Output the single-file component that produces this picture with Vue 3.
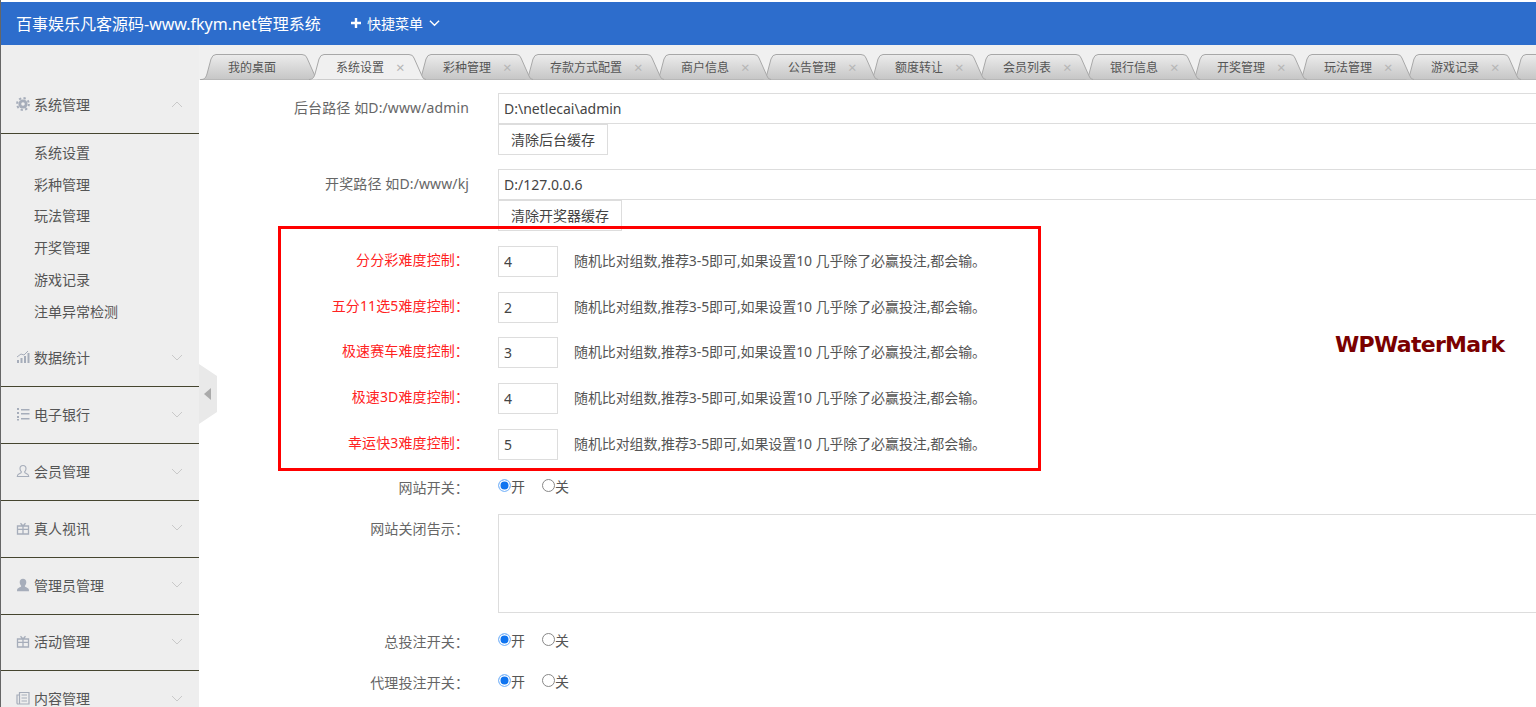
<template>
  <div class="page">
    <header class="topbar">
      <span class="brand">百事娱乐凡客源码-www.fkym.net管理系统</span>
      <a class="quick">
        <svg class="quick-plus" viewBox="0 0 12 12"><path d="M6 1v10M1 6h10" /></svg>
        快捷菜单
        <svg class="quick-arrow" viewBox="0 0 12 8"><path d="M1 1.5l5 5 5-5" /></svg>
      </a>
    </header>

    <div class="body">
      <aside class="sidebar">
        <div v-for="group in menu" :key="group.name" class="group">
          <div class="group-head">
            <svg class="group-icon" viewBox="0 0 14 14" v-html="icons[group.icon]"></svg>
            <span class="group-name">{{ group.name }}</span>
            <svg class="group-arrow" viewBox="0 0 12 7"><path :d="group.items ? 'M1 6l5-5 5 5' : 'M1 1l5 5 5-5'" /></svg>
          </div>
          <ul v-if="group.items" class="sub">
            <li v-for="item in group.items" :key="item">{{ item }}</li>
          </ul>
        </div>
      </aside>

      <main class="main">
        <div class="tabs">
          <svg class="defs" width="0" height="0">
            <defs>
              <linearGradient id="tabfill" x1="0" y1="0" x2="0" y2="1">
                <stop offset="0" stop-color="#ececec" />
                <stop offset="1" stop-color="#c6c6c6" />
              </linearGradient>
            </defs>
          </svg>
          <div
            v-for="(tab, i) in tabs"
            :key="i"
            class="tab"
            :class="{ active: tab.active }"
            :style="{ width: tab.width + 'px', zIndex: tab.active ? 50 : 30 - i }"
          >
            <svg class="tab-bg" :width="tab.width + 10" height="26" :viewBox="`0 0 ${tab.width + 10} 26`">
              <path :d="tabPath(tab.width + 10)" />
            </svg>
            <span class="tab-name">{{ tab.name }}</span>
            <span v-if="tab.close" class="tab-close">×</span>
          </div>
        </div>

        <div class="content">
          <div class="row first">
            <label class="label">后台路径 如D:/www/admin</label>
            <div class="field">
              <input class="input wide" value="D:\netlecai\admin" />
              <button class="btn">清除后台缓存</button>
            </div>
          </div>
          <div class="row">
            <label class="label">开奖路径 如D:/www/kj</label>
            <div class="field">
              <input class="input wide" value="D:/127.0.0.6" />
              <button class="btn">清除开奖器缓存</button>
            </div>
          </div>

          <div v-for="item in levels" :key="item.name" class="row level">
            <label class="label red">{{ item.name }}：</label>
            <div class="field inline">
              <input class="input small" :value="item.value" />
              <span class="hint">随机比对组数,推荐3-5即可,如果设置10 几乎除了必赢投注,都会输。</span>
            </div>
          </div>

          <div class="row switch-a">
            <label class="label">网站开关：</label>
            <div class="radios">
              <label class="radio"><input type="radio" name="site" checked />开</label>
              <label class="radio"><input type="radio" name="site" />关</label>
            </div>
          </div>
          <div class="row notice">
            <label class="label">网站关闭告示：</label>
            <div class="field"><textarea class="area"></textarea></div>
          </div>
          <div class="row switch-b">
            <label class="label">总投注开关：</label>
            <div class="radios">
              <label class="radio"><input type="radio" name="bet" checked />开</label>
              <label class="radio"><input type="radio" name="bet" />关</label>
            </div>
          </div>
          <div class="row switch-c">
            <label class="label">代理投注开关：</label>
            <div class="radios">
              <label class="radio"><input type="radio" name="agent" checked />开</label>
              <label class="radio"><input type="radio" name="agent" />关</label>
            </div>
          </div>

          <!-- annotation drawn on top of the form -->
          <div class="redbox"></div>
          <div class="watermark">WPWaterMark</div>
        </div>

        <div class="collapse"><i></i></div>
      </main>
    </div>
  </div>
</template>

<script setup>
const icons = {
  gear: '<circle cx="7" cy="7" r="4.6" fill="#a6adba"/><circle cx="7" cy="7" r="5.9" fill="none" stroke="#a6adba" stroke-width="2" stroke-dasharray="2.3 2.3"/><circle cx="7" cy="7" r="1.8" fill="#eee"/>',
  chart: '<path d="M1 13v-3h2v3zM4.500 13V8h2v5zM8 13V6h2v7zM11.500 13V3h2v10z" fill="#a6adba"/><path d="M1 7l4-3 3 1 4-4" fill="none" stroke="#a6adba"/>',
  list: '<path d="M1 1h2v2H1zM1 5h2v2H1zM1 9h2v2H1zM1 12h2v1.500H1zM5 2h8.500v1.500H5zM5 6h8.500v1.500H5zM5 11h8.500v1.500H5z" fill="#a6adba"/>',
  user: '<path d="M7 1.500c-2 0-3 1.500-3 3.200 0 1.500.8 2.500 1.400 3.200 0 1-1 1.300-2.600 2-1.200.5-1.500 1.300-1.500 2.600h11.400c0-1.300-.3-2.100-1.500-2.600-1.600-.7-2.600-1-2.600-2C9.200 7.200 10 6.200 10 4.700c0-1.700-1-3.200-3-3.200z" fill="none" stroke="#a6adba" stroke-width="1.100"/>',
  gift: '<path d="M1.500 5h11v8h-11zM1.500 8.300h11M7 5v8M4.500 2.200L7 5l2.500-2.800" fill="none" stroke="#a6adba" stroke-width="1.300"/>',
  admin: '<path d="M7 .8c-2.100 0-3.300 1.500-3.300 3.500 0 1.600.7 2.800 1.500 3.500 0 1-1 1.400-2.700 2.100C1.300 10.400 1 11.300 1 13.200h12c0-1.900-.3-2.800-1.500-3.300-1.700-.7-2.700-1.100-2.700-2.100.8-.7 1.500-1.900 1.500-3.500C10.300 2.300 9.100.8 7 .8z" fill="#a6adba"/>',
  news: '<path d="M3.500 1.500h9.500v11.500H2a1 1 0 0 1-1-1V4h2.500zM3.500 4v9M5.500 4h5.500M5.500 7h5.500M5.500 10h5.500" fill="none" stroke="#a6adba" stroke-width="1.200"/>',
}

const menu = [
  { name: '系统管理', icon: 'gear', items: ['系统设置', '彩种管理', '玩法管理', '开奖管理', '游戏记录', '注单异常检测'] },
  { name: '数据统计', icon: 'chart' },
  { name: '电子银行', icon: 'list' },
  { name: '会员管理', icon: 'user' },
  { name: '真人视讯', icon: 'gift' },
  { name: '管理员管理', icon: 'admin' },
  { name: '活动管理', icon: 'gift' },
  { name: '内容管理', icon: 'news' },
]

const tabs = [
  { name: '我的桌面', width: 108 },
  { name: '系统设置', width: 107, close: true, active: true },
  { name: '彩种管理', width: 107, close: true },
  { name: '存款方式配置', width: 131, close: true },
  { name: '商户信息', width: 107, close: true },
  { name: '公告管理', width: 107, close: true },
  { name: '额度转让', width: 108, close: true },
  { name: '会员列表', width: 107, close: true },
  { name: '银行信息', width: 107, close: true },
  { name: '开奖管理', width: 107, close: true },
  { name: '玩法管理', width: 107, close: true },
  { name: '游戏记录', width: 107, close: true },
  { name: '', width: 107 },
]

const levels = [
  { name: '分分彩难度控制', value: 4 },
  { name: '五分11选5难度控制', value: 2 },
  { name: '极速赛车难度控制', value: 3 },
  { name: '极速3D难度控制', value: 4 },
  { name: '幸运快3难度控制', value: 5 },
]

function tabPath(w) {
  return `M0 25.500C4 25.500 5 23 6 20L10 5Q11.500 .5 15 .5L${w - 17} .5Q${w - 13} .5 ${w - 12} 4L${w - 4} 22Q${w - 3} 25.500 ${w} 25.500`
}
</script>

<style>
html, body {
  margin: 0;
  overflow: hidden;
}
</style>

<style scoped>
.page {
  height: 707px;
  overflow: hidden;
  display: flex;
  flex-direction: column;
  padding-top: 2px;
  box-sizing: border-box;
  border-left: 1px solid #666;
  background: #fff;
  font-family: "Noto Sans", "Noto Sans CJK SC", sans-serif;
}

.topbar {
  height: 43px;
  flex: none;
  display: flex;
  align-items: center;
  box-sizing: border-box;
  padding: 0 0 2px 15px;
  background: #2d6dcc;
  color: #fff;
}

.brand {
  font-size: 16px;
  width: 334px;
}

.quick {
  display: flex;
  align-items: center;
  font-size: 14px;
}

.quick-plus {
  width: 12px;
  height: 12px;
  margin-right: 5px;
  fill: none;
  stroke: #fff;
  stroke-width: 2.4;
}

.quick-arrow {
  width: 11px;
  height: 8px;
  margin-left: 6px;
  fill: none;
  stroke: #fff;
  stroke-width: 1.5;
}

.body {
  flex: 1;
  display: flex;
  min-height: 0;
}

.sidebar {
  width: 198px;
  flex: none;
  padding-top: 33px;
  background: #eee;
  color: #555;
  font-size: 14px;
}

.group {
  border-bottom: 1px solid #45452f;
}

.group-head {
  height: 55.8px;
  box-sizing: border-box;
  display: flex;
  align-items: center;
  padding: 0 16px 2px 15px;
}

.group:first-child {
  border-bottom: none;
}

.group:first-child .group-head {
  border-bottom: 1px solid #45452f;
}

.group-icon {
  width: 14px;
  height: 14px;
  margin-right: 4px;
}

.group-name {
  flex: 1;
}

.group-arrow {
  width: 12px;
  height: 7px;
  fill: none;
  stroke: #c9c9c9;
}

.sub {
  list-style: none;
  margin: 0;
  padding: 3px 0 2px 33px;
  border-bottom: 1px solid transparent;
}

.sub li {
  height: 31.8px;
  line-height: 31.8px;
}

.main {
  flex: 1;
  min-width: 0;
  position: relative;
  display: flex;
  flex-direction: column;
}

.tabs {
  height: 35px;
  flex: none;
  display: flex;
  align-items: flex-end;
  box-sizing: border-box;
  padding-left: 1px;
  overflow: hidden;
  background: #f0f0f0;
  border-left: 1px solid #f0f0f0;
  position: relative;
  box-shadow: inset 0 -1px 0 #aaa;
}

.defs {
  position: absolute;
}

.tab {
  flex: none;
  position: relative;
  height: 26px;
  display: flex;
  align-items: center;
  padding-left: 27px;
  box-sizing: border-box;
  color: #555;
  font-size: 12px;
}

.tab-bg {
  position: absolute;
  left: 0;
  top: 0;
}

.tab-bg path {
  fill: url(#tabfill);
  stroke: #a8a8a8;
}

.tab.active .tab-bg path {
  fill: #f0f0f0;
}

.tab-name,
.tab-close {
  position: relative;
}

.tab-close {
  margin-left: 12px;
  color: #b5b5b5;
  font-size: 15px;
  line-height: 1;
}

.content {
  flex: 1;
  position: relative;
  padding-top: 13px;
  overflow: hidden;
  color: #666;
  font-size: 14px;
}

.row {
  display: flex;
  margin-top: 14px;
}

.row.first {
  margin-top: 0;
}

.row.level {
  margin-top: 14.75px;
}

.row.level .label {
  line-height: 28px;
}

.row.switch-a {
  margin-top: 13px;
}

.row.notice,
.row.switch-c {
  margin-top: 11px;
}

.label {
  width: 270px;
  flex: none;
  text-align: right;
  line-height: 30px;
  letter-spacing: .12px;
  white-space: nowrap;
}

.label.red {
  color: #f22;
}

.field {
  margin-left: 29px;
  display: flex;
  flex-direction: column;
  align-items: flex-start;
}

.field.inline {
  flex-direction: row;
  align-items: center;
}

.input {
  box-sizing: border-box;
  height: 31px;
  padding: 0 5px;
  border: 1px solid #ddd;
  background: #fff;
  color: #444;
  font: inherit;
  outline: none;
}

.input.wide {
  width: 1100px;
}

.input.small {
  width: 60px;
}

.btn {
  box-sizing: border-box;
  height: 31px;
  padding: 0 12px 2px;
  border: 1px solid #ddd;
  background: #fff;
  color: #444;
  font: inherit;
}

.hint {
  margin: 0 0 3px 16px;
  color: #555;
  font-size: 14px;
  letter-spacing: -.1px;
  white-space: nowrap;
}

.radios {
  margin-left: 29px;
  height: 26px;
  display: flex;
  align-items: center;
}

.radio {
  width: 44px;
  display: flex;
  align-items: center;
  color: #555;
}

.radio input {
  appearance: none;
  box-sizing: border-box;
  width: 13px;
  height: 13px;
  margin: 0;
  border: 1px solid #888;
  border-radius: 50%;
  background: #fff;
}

.radio input:checked {
  border: 1.5px solid #8fc1fb;
  background: #0f74f0;
  box-shadow: inset 0 0 0 1.5px #fff;
}

.area {
  box-sizing: border-box;
  display: block;
  width: 1100px;
  height: 99px;
  border: 1px solid #ddd;
  outline: none;
  resize: none;
}

.redbox {
  position: absolute;
  left: 79px;
  top: 146px;
  width: 763px;
  height: 245px;
  box-sizing: border-box;
  border: 3px solid #f00;
  pointer-events: none;
}

.watermark {
  position: absolute;
  left: 1136px;
  top: 249px;
  color: #7a0000;
  font-family: "DejaVu Sans", sans-serif;
  font-size: 22px;
  font-weight: 700;
  letter-spacing: -.7px;
  line-height: 32px;
}

.collapse {
  position: absolute;
  left: 0;
  top: 319px;
  width: 18px;
  height: 60px;
  background: #e9e9e9;
  clip-path: polygon(0 0, 100% 20%, 100% 80%, 0 100%);
  display: flex;
  align-items: center;
  padding-left: 5px;
  box-sizing: border-box;
}

.collapse i {
  width: 0;
  height: 0;
  border-style: solid;
  border-width: 6px 7px 6px 0;
  border-color: transparent #aaa transparent transparent;
}
</style>
